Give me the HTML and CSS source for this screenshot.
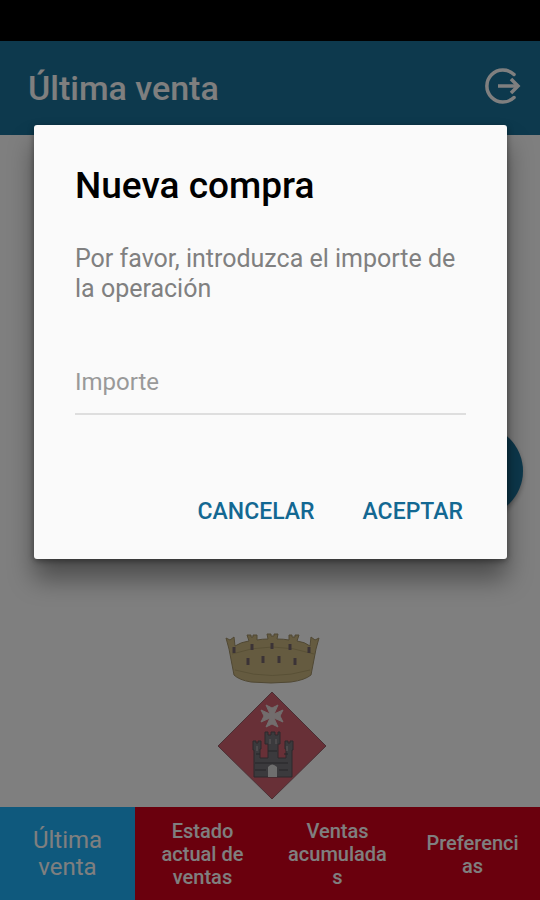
FILE: index.html
```
<!DOCTYPE html>
<html lang="es">
<head>
    <meta charset="utf-8">
    <meta name="viewport" content="width=device-width, initial-scale=1">
    <title>Última venta</title>
    <link rel="stylesheet" href="styles.css">
</head>
<body>
    <div class="status-bar"></div>
    <div class="app">
        <header class="toolbar">
            <h1>Última venta</h1>
            <button type="button" class="logout" aria-label="Salir">
                <svg viewBox="0 0 36 36" width="36" height="36" fill="none" stroke="currentColor" stroke-width="3.500">
                    <path d="M29 6.500A16 16 0 1 0 29 29.500" stroke-linecap="round"/>
                    <path d="M13 18H32"/>
                    <path d="M26 11L33 18L26 25"/>
                </svg>
            </button>
        </header>

        <main class="content">
            <button type="button" class="fab" aria-label="Nueva compra"></button>
            <svg class="shield" viewBox="0 0 110 168" width="110" height="168">
                <!-- Corona -->
                <path d="M9 6L13 8L17 5L18 14Q24 10 32 9L30 3H34V5H36V3H40V8Q45 7 51 7L50 2H54V4H57V2H61L60 7Q67 7 72 8V3H75V5H78V3H82L80 9Q88 10 93 14L94 5L98 8L102 6L99 17L94 43Q88 48 74 50Q54 52 34 50Q22 48 17 43L12 17Z" fill="#cab780" stroke="#a09068"/>
                <path d="M15 22Q55 8 97 22" fill="none" stroke="#b3a16d"/>
                <path d="M18 38Q55 49 93 38" fill="none" stroke="#b3a16d"/>
                <path d="M17 15v6M35 12v6M55 11v6M73 12v6M92 15v6M31 26v7M46 24v7M62 24v7M78 26v7" stroke="#76666c" stroke-width="3"/>
                <!-- Rombo -->
                <path d="M55 60L109 114L55 167L1 114Z" fill="#d0606e" stroke="#96606a"/>
                <path d="M49 73L55 76L61 73L57 82L66 78L63 84L66 90L57 86L61 95L55 92L49 95L53 86L44 90L47 84L44 78L53 82Z" fill="#e4dada" stroke="#e4dada"/>
                <path d="M48 100h3v3h3v-3h4v3h3v-3h2v12h-2v14h8v-9h-1v-8h3v2h2v-2h3v9h-1v27H37v-27h-1v-9h3v2h2v-2h3v8h-1v9h8v-14h-3Z" fill="#77757a" stroke="#5a5358"/>
                <path d="M38 131h33M38 138h11M62 138h9M51 119h9M39 122h4M67 122h4" stroke="#4d4b50"/>
                <path d="M53 107v5M59 107v5M40 114v5M70 114v5" stroke="#bdb5b8" stroke-width="1"/>
                <path d="M51 145V135Q55 130 60 135V145Z" fill="#dcdcdc"/>
            </svg>
        </main>

        <nav class="tabs">
            <a href="#ultima" class="tab active">Última venta</a>
            <a href="#estado" class="tab">Estado actual de ventas</a>
            <a href="#acumuladas" class="tab">Ventas acumuladas</a>
            <a href="#preferencias" class="tab">Preferencias</a>
        </nav>

        <div class="backdrop">
            <form class="dialog" role="dialog" aria-labelledby="dialog-title">
                <h2 id="dialog-title">Nueva compra</h2>
                <label for="importe">Por favor, introduzca el importe de la operación</label>
                <input type="text" id="importe" name="importe" inputmode="decimal" placeholder="Importe">
                <div class="dialog-buttons">
                    <button type="button">CANCELAR</button>
                    <button type="submit">ACEPTAR</button>
                </div>
            </form>
        </div>
    </div>
</body>
</html>
```

FILE: styles.css
```
* {
    box-sizing: border-box;
}

body {
    margin: 0;
    min-height: 100vh;
    display: flex;
    flex-direction: column;
    font-family: Roboto, "Liberation Sans", sans-serif;
    background-color: #fff;
}

button {
    padding: 0;
    border: none;
    background: none;
    font-family: inherit;
    cursor: pointer;
}

.status-bar {
    height: 41px;
    background-color: #000;
}

.app {
    position: relative;
    flex: 1;
    display: flex;
    flex-direction: column;
}

/* Toolbar */
.toolbar {
    display: flex;
    align-items: center;
    justify-content: space-between;
    height: 94px;
    padding: 0 19px 0 28px;
    background-color: #1a729a;
    color: #fff;
}

.toolbar h1 {
    margin: 0;
    font-size: 34px;
    font-weight: 500;
}

.logout {
    height: 40px;
    color: #fff;
}

.logout svg {
    display: block;
    margin-bottom: 4px;
}

/* Content */
.content {
    position: relative;
    flex: 1;
    display: flex;
    align-items: flex-end;
    justify-content: center;
    padding: 0 0 7px 3px;
}

.shield {
    display: block;
}

.fab {
    position: absolute;
    top: 290px;
    right: 17px;
    width: 92px;
    height: 92px;
    border-radius: 50%;
    background-color: #1a729a;
    box-shadow: 0 3px 5px rgba(0, 0, 0, 0.3);
}

/* Bottom tabs */
.tabs {
    display: grid;
    grid-template-columns: repeat(4, 1fr);
    min-height: 93px;
    background-color: #d4001a;
}

.tab {
    display: flex;
    align-items: center;
    justify-content: center;
    padding: 2px 17px 0;
    color: #fff;
    font-size: 20px;
    font-weight: 500;
    line-height: 23px;
    text-align: center;
    text-decoration: none;
    word-break: break-word;
}

.tab.active {
    padding-top: 0;
    background-color: #1eb2fa;
    font-size: 24px;
    font-weight: 400;
    line-height: 27px;
}

/* Dialog */
.backdrop {
    position: absolute;
    inset: 0;
    padding: 84px 33px 0 34px;
    background-color: rgba(0, 0, 0, 0.5);
}

.dialog {
    display: flex;
    flex-direction: column;
    padding: 41px 41px 30px;
    border-radius: 3px;
    background-color: #fafafa;
    box-shadow: 0 20px 26px rgba(0, 0, 0, 0.4), 0 2px 6px rgba(0, 0, 0, 0.4);
}

.dialog h2 {
    margin: 0 0 38px;
    color: #000;
    font-size: 37px;
    font-weight: 500;
    line-height: 40px;
}

.dialog label {
    color: #808080;
    font-size: 25px;
    line-height: 30px;
}

.dialog input {
    width: 100%;
    height: 64px;
    margin: 47px 0 78px;
    padding: 0;
    border: none;
    border-bottom: 2px solid #dedede;
    border-radius: 0;
    background: none;
    font-family: inherit;
    font-size: 24px;
    outline: none;
}

.dialog input::placeholder {
    color: #999;
}

.dialog-buttons {
    display: flex;
    justify-content: flex-end;
    gap: 48px;
    padding-right: 3px;
}

.dialog-buttons button {
    height: 36px;
    color: #136892;
    font-size: 23px;
    font-weight: 500;
}
```
